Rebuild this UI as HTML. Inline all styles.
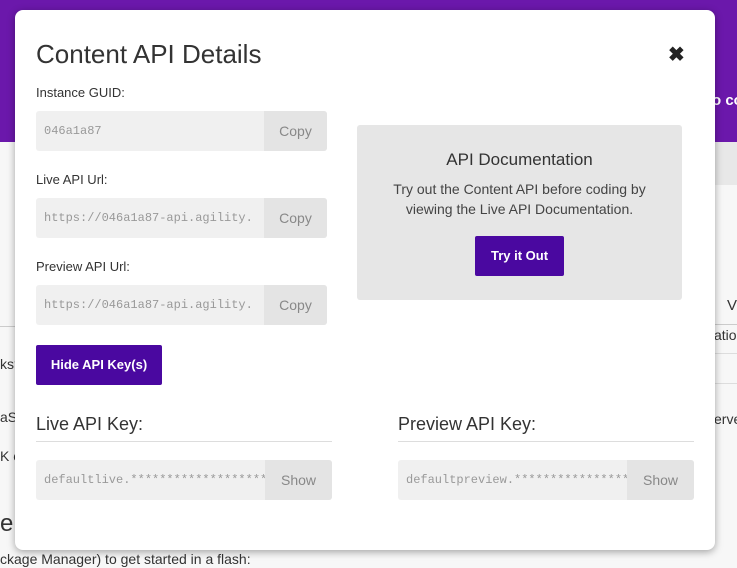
<!DOCTYPE html>
<html><head><style>
*{margin:0;padding:0;box-sizing:border-box}
body{width:737px;height:568px;overflow:hidden;position:relative;font-family:"Liberation Sans",sans-serif;background:#f7f7f7;color:#333}
.abs{position:absolute}
.modal{position:absolute;left:15px;top:10px;width:700px;height:540px;background:#fff;border-radius:8px;box-shadow:0 2px 8px rgba(0,0,0,.35)}
.lbl{position:absolute;font-size:13px;color:#333}
.inp{position:absolute;height:40px;background:#f0f0f0;border-radius:3px;overflow:hidden}
.inp span{position:absolute;left:8px;top:13px;font-family:"Liberation Mono",monospace;font-size:12px;color:#999;white-space:nowrap}
.inp b{position:absolute;right:0;top:0;height:40px;background:#e4e4e4;font-weight:normal;color:#888;font-size:14px;text-align:center;line-height:40px}
.btn{position:absolute;background:#4a08a0;color:#fff;font-weight:bold;font-size:13px;text-align:center;line-height:40px;border-radius:2px}
.h{position:absolute;font-size:18px;color:#333;border-bottom:1px solid #ddd;padding-bottom:6px}
</style></head><body>
<div class="abs" style="left:0;top:0;width:737px;height:142px;background:#6b18ab"></div>
<div class="abs" style="left:714px;top:142px;width:23px;height:43px;background:#e8e8e8"></div>
<div class="abs" style="left:712px;top:92px;color:#fff;font-weight:bold;font-size:15px;white-space:nowrap">o co</div>
<div class="abs" style="left:727px;top:297px;font-size:15px">V</div>
<div class="abs" style="left:714px;top:324px;width:23px;border-top:1px solid #ccc"></div>
<div class="abs" style="left:714px;top:353px;width:23px;border-top:1px solid #ddd"></div>
<div class="abs" style="left:714px;top:383px;width:23px;border-top:1px solid #ddd"></div>
<div class="abs" style="left:714px;top:327px;font-size:14px">atio</div>
<div class="abs" style="left:714px;top:411px;font-size:14px">erve</div>
<div class="abs" style="left:0;top:326px;width:15px;border-top:1px solid #ccc"></div>
<div class="abs" style="left:0;top:356px;font-size:14px">ks?</div>
<div class="abs" style="left:0;top:409px;font-size:14px">aS</div>
<div class="abs" style="left:0;top:448px;font-size:14px">K c</div>
<div class="abs" style="left:0;top:510px;font-size:24px">e</div>
<div class="abs" style="left:0;top:551px;font-size:14px">ckage Manager) to get started in a flash:</div>

<div class="modal"></div>
<div class="abs" style="left:36px;top:39px;font-size:26px;color:#333">Content API Details</div>
<div class="abs" style="left:668px;top:42px;font-size:20px;font-weight:bold;color:#222">✖</div>

<div class="lbl" style="left:36px;top:85px">Instance GUID:</div>
<div class="inp" style="left:36px;top:111px;width:291px"><span>046a1a87</span><b style="width:63px">Copy</b></div>
<div class="lbl" style="left:36px;top:172px">Live API Url:</div>
<div class="inp" style="left:36px;top:198px;width:291px"><span>https://046a1a87-api.agility.</span><b style="width:63px">Copy</b></div>
<div class="lbl" style="left:36px;top:259px">Preview API Url:</div>
<div class="inp" style="left:36px;top:285px;width:291px"><span>https://046a1a87-api.agility.</span><b style="width:63px">Copy</b></div>
<div class="btn" style="left:36px;top:345px;width:126px;height:40px">Hide API Key(s)</div>

<div class="abs" style="left:357px;top:125px;width:325px;height:175px;background:#e6e6e6;border-radius:3px;text-align:center">
<div style="margin-top:25px;font-size:17px;color:#333">API Documentation</div>
<div style="margin-top:9px;font-size:14px;line-height:20px;color:#444">Try out the Content API before coding by<br>viewing the Live API Documentation.</div>
</div>
<div class="btn" style="left:475px;top:236px;width:89px;height:40px">Try it Out</div>

<div class="h" style="left:36px;top:414px;width:296px">Live API Key:</div>
<div class="inp" style="left:36px;top:460px;width:296px"><span>defaultlive.*******************</span><b style="width:67px">Show</b></div>
<div class="h" style="left:398px;top:414px;width:296px">Preview API Key:</div>
<div class="inp" style="left:398px;top:460px;width:296px"><span>defaultpreview.*****************</span><b style="width:67px">Show</b></div>
</body></html>
